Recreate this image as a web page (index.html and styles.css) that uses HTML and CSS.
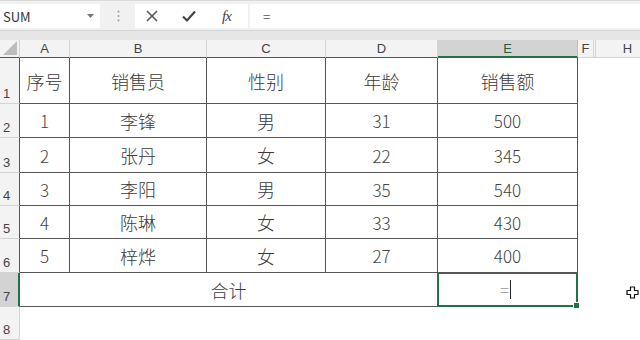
FILE: index.html
```html
<!DOCTYPE html>
<html lang="zh-CN">
<head>
  <meta charset="UTF-8">
  <title>销售表</title>
  <link rel="stylesheet" href="styles.css">
</head>
<body>
  <div class="formula-bar">
    <div class="name-box">
      <span>SUM</span>
      <svg class="drop" width="7" height="4" viewBox="0 0 7 4"><path d="M0 0h7L3.5 4z" fill="#777"/></svg>
    </div>
    <div class="grip">
      <svg width="3" height="12" viewBox="0 0 3 12"><circle cx="1.5" cy="1.5" r="1" fill="#9a9a9a"/><circle cx="1.5" cy="6" r="1" fill="#9a9a9a"/><circle cx="1.5" cy="10.5" r="1" fill="#9a9a9a"/></svg>
    </div>
    <div class="fx-buttons">
      <svg width="14" height="14" viewBox="0 0 14 14"><path d="M2 2l10 10M12 2L2 12" stroke="#555" stroke-width="1.5" fill="none"/></svg>
      <svg width="16" height="14" viewBox="0 0 16 14"><path d="M2 7.5l4 4L14 2.5" stroke="#444" stroke-width="2.2" fill="none"/></svg>
      <span class="fx">fx</span>
    </div>
    <div class="formula-input">=</div>
  </div>
  <div class="band"></div>

  <div class="sheet">
    <div class="corner"><svg width="14" height="14" viewBox="0 0 14 14"><path d="M14 0v14H0z" fill="#bdbdbd"/></svg></div>
    <div class="ch">A</div>
    <div class="ch">B</div>
    <div class="ch">C</div>
    <div class="ch">D</div>
    <div class="ch ch-sel">E</div>
    <div class="ch ch-out">F</div>
    <div class="ch ch-out"></div>
    <div class="ch ch-out">H</div>

    <div class="rh">1</div>
    <div class="c">序号</div>
    <div class="c">销售员</div>
    <div class="c">性别</div>
    <div class="c">年龄</div>
    <div class="c">销售额</div>
    <div class="e"></div><div class="e"></div><div class="e"></div>

    <div class="rh">2</div>
    <div class="c n">1</div>
    <div class="c">李锋</div>
    <div class="c">男</div>
    <div class="c n">31</div>
    <div class="c n">500</div>
    <div class="e"></div><div class="e"></div><div class="e"></div>

    <div class="rh">3</div>
    <div class="c n">2</div>
    <div class="c">张丹</div>
    <div class="c">女</div>
    <div class="c n">22</div>
    <div class="c n">345</div>
    <div class="e"></div><div class="e"></div><div class="e"></div>

    <div class="rh">4</div>
    <div class="c n">3</div>
    <div class="c">李阳</div>
    <div class="c">男</div>
    <div class="c n">35</div>
    <div class="c n">540</div>
    <div class="e"></div><div class="e"></div><div class="e"></div>

    <div class="rh">5</div>
    <div class="c n">4</div>
    <div class="c">陈琳</div>
    <div class="c">女</div>
    <div class="c n">33</div>
    <div class="c n">430</div>
    <div class="e"></div><div class="e"></div><div class="e"></div>

    <div class="rh">6</div>
    <div class="c n">5</div>
    <div class="c">梓烨</div>
    <div class="c">女</div>
    <div class="c n">27</div>
    <div class="c n">400</div>
    <div class="e"></div><div class="e"></div><div class="e"></div>

    <div class="rh rh-sel">7</div>
    <div class="c merged">合计</div>
    <div class="c active"><span class="eq">=</span><span class="caret"></span><span class="handle"></span></div>
    <div class="e"></div><div class="e"></div><div class="e cursor-cell">
      <svg class="cursor" width="13" height="13" viewBox="0 0 13 13"><path d="M4.5 1h4v3.5H12v4H8.5V12h-4V8.5H1v-4h3.5z" fill="#fff" stroke="#111" stroke-width="1.2" stroke-linejoin="round"/></svg>
    </div>

    <div class="rh rh-last">8</div>
    <div class="e"></div><div class="e"></div><div class="e"></div><div class="e"></div><div class="e"></div>
    <div class="e"></div><div class="e"></div><div class="e"></div>
  </div>
</body>
</html>
```

FILE: styles.css
```css
body {
  margin: 0;
  width: 640px;
  height: 340px;
  overflow: hidden;
  background: #fff;
  font-family: "Noto Sans CJK SC", "Liberation Sans", sans-serif;
  color: #333;
}

.formula-bar {
  display: flex;
  height: 30px;
  box-sizing: border-box;
  padding-top: 3px;
  padding-bottom: 2px;
  background: #f1f1f1;
  border-top: 1px solid #dadada;
}

.name-box {
  width: 100px;
  background: #fff;
  display: flex;
  align-items: center;
  justify-content: space-between;
  padding: 0 6px 0 3px;
  box-sizing: border-box;
  font-size: 13px;
  color: #333;
}

.grip {
  width: 33px;
  display: flex;
  align-items: center;
  justify-content: center;
  padding-left: 2px;
}

.fx-buttons {
  width: 113px;
  background: #fff;
  display: flex;
  align-items: center;
  padding-left: 10px;
  box-sizing: border-box;
}

.fx-buttons svg:first-child { margin-right: 22px; }
.fx-buttons svg:nth-child(2) { margin-right: 25px; }

.fx {
  font-family: "Liberation Serif", serif;
  font-style: italic;
  font-size: 15px;
  color: #444;
  letter-spacing: -1px;
}

.formula-input {
  flex: 1;
  margin-left: 2px;
  background: #fff;
  padding-left: 13px;
  font-size: 13px;
  color: #555;
  display: flex;
  align-items: center;
}

.band {
  height: 10px;
  background: #e6e6e6;
  border-top: 1px solid #d4d4d4;
  box-sizing: border-box;
}

.sheet {
  display: grid;
  grid-template-columns: 20px 50px 137px 119px 112px 140px 16px 2px 64px;
  grid-template-rows: 18px 46px 34px 35px 33px 33px 34px 34px 33px;
  width: 660px;
}

.sheet > div {
  box-sizing: border-box;
}

.corner {
  background: #f3f3f3;
  border-right: 1px solid #d4d4d4;
  border-bottom: 1px solid #555;
  display: flex;
  align-items: flex-end;
  justify-content: flex-end;
  padding: 0 2px 2px 0;
}

.ch {
  background: #f3f3f3;
  border-right: 1px solid #d4d4d4;
  border-bottom: 1px solid #555;
  font-size: 13px;
  color: #444;
  text-align: center;
  line-height: 17px;
  font-family: "Liberation Sans", sans-serif;
}

.ch-sel {
  background: #d3d3d3;
  color: #2a5a3c;
  border-bottom: 2px solid #217346;
  border-right-color: #bdbdbd;
}

.ch-out {
  border-bottom: 1px solid #d4d4d4;
}

.rh {
  background: #f3f3f3;
  border-right: 1px solid #555;
  border-bottom: 1px solid #d4d4d4;
  font-size: 13px;
  color: #444;
  font-family: "Liberation Sans", sans-serif;
  display: flex;
  align-items: flex-end;
  padding: 0 0 2px 3px;
}

.rh-sel {
  background: #d3d3d3;
  border-right: 2px solid #217346;
}

.rh-last {
  border-right-color: #d4d4d4;
}

.c {
  border-right: 1px solid #555;
  border-bottom: 1px solid #555;
  display: flex;
  align-items: center;
  justify-content: center;
  font-size: 18px;
  font-weight: 300;
  color: #3a3a3a;
}

.n {
  font-size: 17px;
  color: #444;
}

.merged {
  grid-column: span 4;
}

.active {
  position: relative;
  border: 2px solid #217346;
  border-top-width: 1px;
  border-left-width: 1px;
  color: #999;
}

.eq {
  font-size: 17px;
  margin-left: -4px;
}

.caret {
  width: 1px;
  height: 19px;
  background: #222;
  margin-left: 1px;
}

.handle {
  position: absolute;
  right: -4px;
  bottom: -4px;
  width: 5px;
  height: 5px;
  background: #217346;
  border: 1px solid #fff;
}

.cursor-cell {
  position: relative;
}

.cursor {
  position: absolute;
  left: 30px;
  top: 13px;
}
```
